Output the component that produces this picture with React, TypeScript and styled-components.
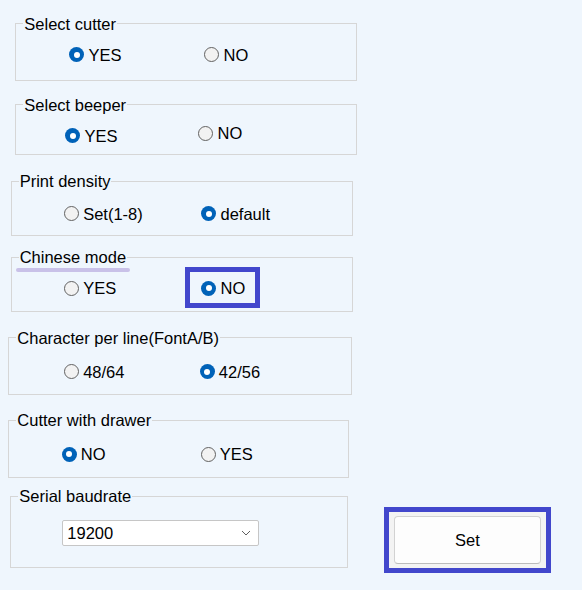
import styled, { createGlobalStyle, css } from "styled-components";

const BG = "#eff6fd";

const GlobalStyle = createGlobalStyle`
  html, body {
    margin: 0;
    padding: 0;
    background: ${BG};
    font-family: "Liberation Sans", Arial, sans-serif;
    color: #000;
  }
`;

type Group = {
  title: string;
  top: number;
  left: number;
  width: number;
  height: number;
  pad: number;
  indent: number;
  col: number;
  marked?: boolean;
  options: { label: string; checked?: boolean; boxed?: boolean; lift?: boolean }[];
};

const groups: Group[] = [
  {
    title: "Select cutter",
    top: 23.3, left: 15.3, width: 341.4, height: 57.7, pad: 21.5, indent: 53.2, col: 135,
    options: [{ label: "YES", checked: true }, { label: "NO" }],
  },
  {
    title: "Select beeper",
    top: 23.3, left: 15.3, width: 341.4, height: 50.7, pad: 21.5, indent: 49.2, col: 133,
    options: [{ label: "YES", checked: true }, { label: "NO", lift: true }],
  },
  {
    title: "Print density",
    top: 25.7, left: 10.7, width: 342.3, height: 55.3, pad: 23.3, indent: 52.5, col: 137.3,
    options: [{ label: "Set(1-8)" }, { label: "default", checked: true }],
  },
  {
    title: "Chinese mode",
    top: 20.7, left: 10.7, width: 342.3, height: 55.3, pad: 21.7, indent: 52.5, col: 137.3,
    marked: true,
    options: [{ label: "YES" }, { label: "NO", checked: true, boxed: true }],
  },
  {
    title: "Character per line(FontA/B)",
    top: 25.3, left: 8.3, width: 343.4, height: 58, pad: 24.4, indent: 54.9, col: 135.6,
    options: [{ label: "48/64" }, { label: "42/56", checked: true }],
  },
  {
    title: "Cutter with drawer",
    top: 24.7, left: 8.3, width: 341, height: 57.7, pad: 24.4, indent: 52.5, col: 139,
    options: [{ label: "NO", checked: true }, { label: "YES" }],
  },
];

export default function App() {
  return (
    <>
      <GlobalStyle />
      <Page>
        {groups.map((g) => (
          <GroupBox
            key={g.title}
            $top={g.top}
            $left={g.left}
            $width={g.width}
            $height={g.height}
            $pad={g.pad}
          >
            <Legend $marked={g.marked}>{g.title}</Legend>
            <Row $indent={g.indent}>
              {g.options.map((o, i) => (
                <Option
                  key={o.label}
                  $width={i === 0 ? g.col : undefined}
                  $boxed={o.boxed}
                  $lift={o.lift}
                >
                  <Radio type="radio" name={g.title} defaultChecked={o.checked} />
                  {o.label}
                </Option>
              ))}
            </Row>
          </GroupBox>
        ))}

        <BottomRow>
          <GroupBox $top={18.3} $left={10.3} $width={337.4} $height={72.3} $pad={23.3}>
            <Legend>Serial baudrate</Legend>
            <Combo>
              <span>19200</span>
              <svg width="10" height="6" viewBox="0 0 10 6">
                <path d="M1 1 L5 5 L9 1" fill="none" stroke="#606060" strokeWidth="1" />
              </svg>
            </Combo>
          </GroupBox>
          <SetFrame>
            <SetButton>Set</SetButton>
          </SetFrame>
        </BottomRow>
      </Page>
    </>
  );
}

const Page = styled.div`
  display: flex;
  flex-direction: column;
  width: 582px;
  height: 590px;
  background: ${BG};
  font-size: 16.5px;
`;

const GroupBox = styled.div<{
  $top: number;
  $left: number;
  $width: number;
  $height: number;
  $pad: number;
}>`
  position: relative;
  box-sizing: border-box;
  flex: none;
  margin-top: ${(p) => p.$top}px;
  margin-left: ${(p) => p.$left}px;
  width: ${(p) => p.$width}px;
  height: ${(p) => p.$height}px;
  padding-top: ${(p) => p.$pad}px;
  border: 1px solid #d6d6d6;
`;

const Legend = styled.span<{ $marked?: boolean }>`
  position: absolute;
  top: -9.5px;
  left: 7px;
  padding: 0 1px;
  line-height: 18px;
  background: ${BG};
  white-space: nowrap;

  ${(p) =>
    p.$marked &&
    css`
      &::after {
        content: "";
        position: absolute;
        left: -3px;
        right: -3px;
        bottom: -5.5px;
        height: 4px;
        border-radius: 2px;
        background: #c9c1e8;
      }
    `}
`;

const Row = styled.div<{ $indent: number }>`
  display: flex;
  align-items: flex-start;
  padding-left: ${(p) => p.$indent}px;
`;

const Option = styled.label<{ $width?: number; $boxed?: boolean; $lift?: boolean }>`
  position: relative;
  display: flex;
  align-items: center;
  gap: 4px;
  height: 18px;
  line-height: 18px;
  white-space: nowrap;
  ${(p) => p.$width && `width: ${p.$width}px;`}
  ${(p) => p.$lift && `margin-top: -2.3px;`}

  ${(p) =>
    p.$boxed &&
    css`
      &::before {
        content: "";
        position: absolute;
        top: -12.7px;
        left: -16.5px;
        right: -15px;
        bottom: -11px;
        border: 5px solid #4247cc;
        pointer-events: none;
      }
    `}
`;

const Radio = styled.input`
  appearance: none;
  position: relative;
  box-sizing: border-box;
  flex: none;
  width: 15px;
  height: 15px;
  margin: 0;
  border-radius: 50%;
  border: 1px solid #626262;
  background: #f2f2f2;

  &:checked {
    border: none;
    background: #0062b8;
  }

  &:checked::after {
    content: "";
    position: absolute;
    top: 4.5px;
    left: 4.5px;
    width: 6px;
    height: 6px;
    border-radius: 50%;
    background: #ffffff;
  }
`;

const BottomRow = styled.div`
  display: flex;
  align-items: flex-start;
`;

const Combo = styled.div`
  box-sizing: border-box;
  display: flex;
  align-items: center;
  justify-content: space-between;
  margin-left: 51px;
  width: 197px;
  height: 26px;
  padding: 0 7px 0 4px;
  background: #ffffff;
  border: 1px solid #c6c6c6;
  border-radius: 2px;
  line-height: 18px;
`;

const SetFrame = styled.div`
  box-sizing: border-box;
  flex: none;
  margin-top: 29.7px;
  margin-left: 36.3px;
  width: 167px;
  height: 65.3px;
  padding: 4px 5px;
  border: 5px solid #4247cc;
  background: #f3f3f3;
`;

const SetButton = styled.button`
  box-sizing: border-box;
  display: block;
  width: 100%;
  height: 47.7px;
  margin: 0;
  background: #fdfdfd;
  border: 1px solid #d2d2d2;
  border-bottom-color: #bcbcbc;
  border-radius: 4px;
  font-family: "Liberation Sans", Arial, sans-serif;
  font-size: 16.5px;
  color: #000;
`;
